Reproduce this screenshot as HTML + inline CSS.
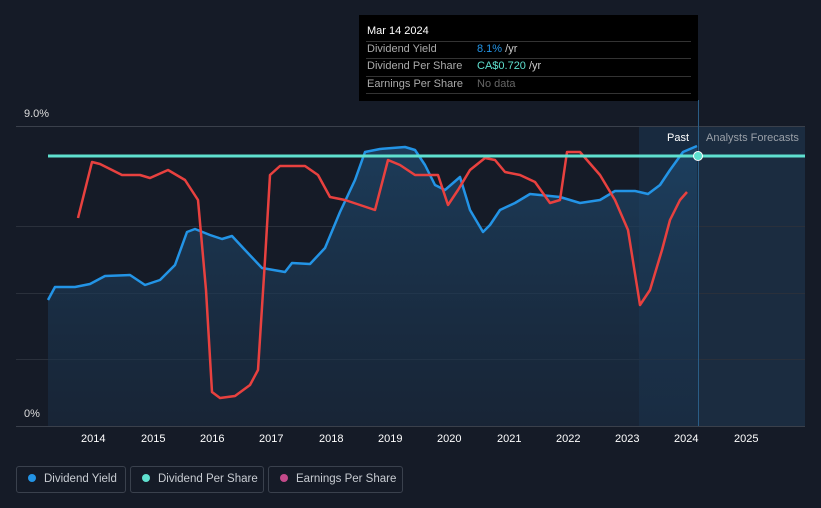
<!DOCTYPE html><html><head><style>
body{margin:0;width:821px;height:508px;background:#151b27;font-family:"Liberation Sans",sans-serif;overflow:hidden;position:relative}
.t{position:absolute;font-size:11px;color:#fff}
.lg{position:absolute;top:466px;height:27px;border:1px solid #3a414d;border-radius:3px;color:#c8ccd2;font-size:11.5px;line-height:25px;box-sizing:border-box;white-space:nowrap;overflow:hidden}
.lg i{display:inline-block;width:8px;height:8px;border-radius:50%;margin:0 8px 0 11px;vertical-align:0px}
</style></head><body>
<svg width="821" height="508" style="position:absolute;left:0;top:0">
<defs><linearGradient id="f" x1="0" y1="0" x2="0" y2="1"><stop offset="0" stop-color="#1e4466" stop-opacity=".8"/><stop offset="1" stop-color="#1a2e45" stop-opacity=".5"/></linearGradient></defs>
<rect x="698" y="126" width="107" height="300" fill="#1b2c40"/>
<rect x="639" y="126" width="59" height="300" fill="#1a3550" opacity=".6"/>
<g stroke="#2a303b" stroke-width="1"><line x1="16" y1="126.5" x2="805" y2="126.5" stroke="#3a404b"/><line x1="16" y1="226.5" x2="805" y2="226.5"/><line x1="16" y1="293.5" x2="805" y2="293.5"/><line x1="16" y1="359.5" x2="805" y2="359.5"/></g>
<line x1="16" y1="426.5" x2="805" y2="426.5" stroke="#3a404b"/>
<path d="M48,300 L55,287 L75,287 L90,284 L105,276 L130,275 L145,285 L160,280 L175,265 L187,232 L195,229 L210,235 L222,239 L232,236 L245,250 L262,268 L285,272 L292,263 L310,264 L325,248 L340,212 L355,180 L365,152 L380,149 L405,147 L415,150 L425,165 L435,185 L445,190 L460,177 L470,210 L483,232 L490,225 L500,210 L515,203 L530,194 L560,197 L580,203 L600,200 L615,191 L635,191 L648,194 L660,185 L670,170 L683,152 L697,146 L698,426 L48,426Z" fill="url(#f)"/>
<path d="M48,300 L55,287 L75,287 L90,284 L105,276 L130,275 L145,285 L160,280 L175,265 L187,232 L195,229 L210,235 L222,239 L232,236 L245,250 L262,268 L285,272 L292,263 L310,264 L325,248 L340,212 L355,180 L365,152 L380,149 L405,147 L415,150 L425,165 L435,185 L445,190 L460,177 L470,210 L483,232 L490,225 L500,210 L515,203 L530,194 L560,197 L580,203 L600,200 L615,191 L635,191 L648,194 L660,185 L670,170 L683,152 L697,146" fill="none" stroke="#2394e6" stroke-width="2.5" stroke-linejoin="round"/>
<path d="M78,218 L92,162 L100,164 L122,175 L140,175 L150,178 L168,170 L185,180 L198,200 L206,290 L212,392 L220,398 L235,396 L250,385 L258,370 L265,260 L270,175 L280,166 L305,166 L318,175 L330,197 L345,200 L360,205 L375,210 L388,160 L400,165 L415,175 L425,175 L438,175 L448,205 L458,190 L470,170 L485,158 L495,160 L505,172 L520,175 L535,182 L550,203 L560,200 L567,152 L580,152 L600,175 L615,200 L628,230 L640,305 L650,290 L662,250 L670,220 L680,200 L687,192" fill="none" stroke="#e8413f" stroke-width="2.5" stroke-linejoin="round"/>
<line x1="48" y1="156" x2="805" y2="156" stroke="#5fe0cf" stroke-width="3"/>
<line x1="698.5" y1="100" x2="698.5" y2="426" stroke="#2a5d86"/>
<circle cx="698" cy="156" r="4.5" fill="#5fe0cf" stroke="#fff" stroke-width="1"/>
</svg>
<div class="t" style="left:24px;top:108px;color:#ddd">9.0%</div>
<div class="t" style="left:24px;top:408px;color:#ddd">0%</div>
<div class="t" style="left:667px;top:132px">Past</div>
<div class="t" style="left:706px;top:132px;color:#9aa0a8">Analysts Forecasts</div>
<div style="position:absolute;left:0;top:433px;width:821px;font-size:11px;color:#fff">
<span style="position:absolute;left:81px">2014</span><span style="position:absolute;left:141px">2015</span><span style="position:absolute;left:200px">2016</span><span style="position:absolute;left:259px">2017</span><span style="position:absolute;left:319px">2018</span><span style="position:absolute;left:378px">2019</span><span style="position:absolute;left:437px">2020</span><span style="position:absolute;left:497px">2021</span><span style="position:absolute;left:556px">2022</span><span style="position:absolute;left:615px">2023</span><span style="position:absolute;left:674px">2024</span><span style="position:absolute;left:734px">2025</span></div>
<div style="position:absolute;left:359px;top:15px;width:339px;height:86px;background:#000;font-size:11px">
<div style="position:absolute;left:8px;top:10px;color:#fff">Mar 14 2024</div>
<div style="position:absolute;left:7px;right:7px;top:26px;border-top:1px solid #333"></div>
<div style="position:absolute;left:8px;top:28px;color:#aaa">Dividend Yield</div><div style="position:absolute;left:118px;top:28px;color:#2394e6">8.1% <span style="color:#ccc">/yr</span></div>
<div style="position:absolute;left:7px;right:7px;top:43px;border-top:1px solid #333"></div>
<div style="position:absolute;left:8px;top:45px;color:#aaa">Dividend Per Share</div><div style="position:absolute;left:118px;top:45px;color:#5fe0cf">CA$0.720 <span style="color:#ccc">/yr</span></div>
<div style="position:absolute;left:7px;right:7px;top:61px;border-top:1px solid #333"></div>
<div style="position:absolute;left:8px;top:63px;color:#aaa">Earnings Per Share</div><div style="position:absolute;left:118px;top:63px;color:#666">No data</div>
<div style="position:absolute;left:7px;right:7px;top:78px;border-top:1px solid #333"></div>
</div>
<div class="lg" style="left:16px;width:110px"><i style="background:#2394e6"></i>Dividend Yield</div>
<div class="lg" style="left:130px;width:134px"><i style="background:#5fe0cf"></i>Dividend Per Share</div>
<div class="lg" style="left:268px;width:135px"><i style="background:#c44a8a"></i>Earnings Per Share</div>
</body></html>
